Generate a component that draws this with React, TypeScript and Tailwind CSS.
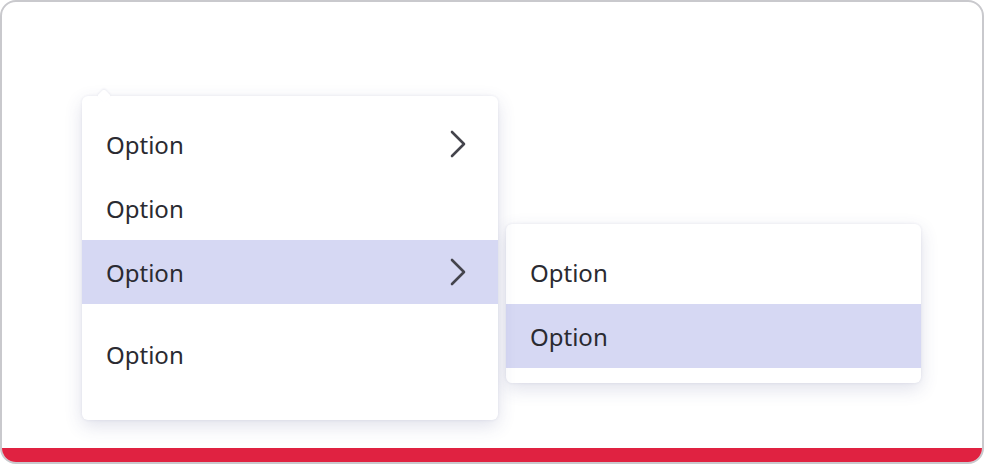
function Row({ label, active, sub }: { label: string; active?: boolean; sub?: boolean }) {
  return (
    <div
      className={[
        "h-16 flex items-center justify-between pl-[24px] pr-[30px]",
        active ? "bg-[#d6d8f3]" : "",
      ].join(" ")}
    >
      <span className="pt-[1px]">{label}</span>
      {sub && (
        <svg width="20" height="28" viewBox="0 0 20 28" fill="none">
          <path d="M4 2 L16 14 L4 26" stroke="#44444c" strokeWidth="2.6" strokeLinecap="round" strokeLinejoin="round" />
        </svg>
      )}
    </div>
  );
}

export default function App() {
  return (
    <div
      className="w-[984px] h-[464px] bg-white border-2 border-[#c9c9cd] rounded-[16px] overflow-hidden flex flex-col text-[24px] text-[#2a2a31]"
      style={{ fontFamily: '"Noto Sans", "Open Sans", sans-serif' }}
    >
      <div className="flex-1 flex items-start pl-[80px] pt-[94px] gap-2">
        {/* main menu */}
        <div className="relative w-[416px] bg-white rounded-[6px] shadow-[0_6px_18px_rgba(60,70,130,0.16),0_0_3px_rgba(60,70,130,0.10)] pt-4 pb-[34px]">
          <div className="absolute -top-[5px] left-[17px] w-[10px] h-[10px] rotate-45 rounded-[2px] bg-white shadow-[-1px_-1px_2px_rgba(60,70,130,0.08)]" />
          <Row label="Option" sub />
          <Row label="Option" />
          <Row label="Option" active sub />
          <div className="mt-[18px]">
            <Row label="Option" />
          </div>
        </div>
        {/* submenu */}
        <div className="mt-[128px] w-[415px] bg-white rounded-[6px] shadow-[0_6px_18px_rgba(60,70,130,0.16),0_0_3px_rgba(60,70,130,0.10)] pt-4 pb-[15px]">
          <Row label="Option" />
          <Row label="Option" active />
        </div>
      </div>
      <div className="h-[14px] bg-[#e02241]" />
    </div>
  );
}
